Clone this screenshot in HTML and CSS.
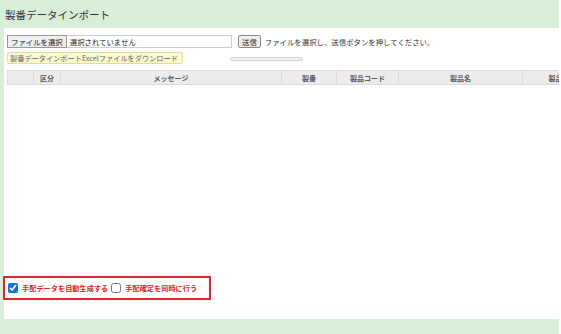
FILE: index.html
```html
<!DOCTYPE html>
<html lang="ja">
<head>
    <meta charset="UTF-8">
    <meta name="viewport" content="width=device-width, initial-scale=1.0">
    <title>製番データインポート</title>
    <link rel="stylesheet" href="styles.css">
</head>
<body>

    <div class="page">
        <div class="page-header">
            <h1>製番データインポート</h1>
        </div>

        <div class="panel">
            <div class="upload-row">
                <div class="file-box">
                    <span class="file-button">ファイルを選択</span>
                    <span class="file-name">選択されていません</span>
                </div>
                <button class="send-button">送信</button>
                <span class="hint">ファイルを選択し、送信ボタンを押してください。</span>
            </div>

            <div class="download-row">
                <a class="download-link" href="#">製番データインポートExcelファイルをダウンロード</a>
                <div class="progress"></div>
            </div>

            <div class="table-wrap">
                <table>
                    <thead>
                        <tr>
                            <th class="col-check"></th>
                            <th class="col-kind">区分</th>
                            <th class="col-message">メッセージ</th>
                            <th class="col-serial">製番</th>
                            <th class="col-code">製品コード</th>
                            <th class="col-name">製品名</th>
                            <th class="col-more">製品区分</th>
                        </tr>
                    </thead>
                    <tbody id="import-table">
                        <!-- rows are filled after import -->
                    </tbody>
                </table>
            </div>

            <div class="options">
                <label class="option">
                    <input type="checkbox" checked>
                    <span>手配データを自動生成する</span>
                </label>
                <label class="option">
                    <input type="checkbox">
                    <span>手配確定を同時に行う</span>
                </label>
            </div>
        </div>
    </div>

</body>
</html>
```

FILE: styles.css
```css
/* General styling */
body {
    margin: 0;
    padding: 0;
    background: #ffffff;
    font-family: "Noto Sans CJK JP", "Noto Sans", sans-serif;
    color: #333;
    overflow: hidden;
}

.page {
    width: 559px;
    height: 334px;
    background: #d9eed9;
    overflow: hidden;
}

.page-header {
    height: 28px;
}

h1 {
    margin: 0;
    padding: 8px 0 0 5px;
    font-size: 10.5px;
    font-weight: normal;
    line-height: 14px;
    color: #333;
}

.panel {
    margin-left: 4px;
    height: 291px;
    background: #ffffff;
    padding: 7px 0 0 3px;
    box-sizing: border-box;
    display: flex;
    flex-direction: column;
}

/* Upload row */
.upload-row {
    display: flex;
    align-items: center;
    height: 13px;
    font-size: 7.4px;
}

.file-box {
    display: flex;
    align-items: center;
    width: 225px;
    height: 13px;
    border: 1px solid #ccc;
    box-sizing: border-box;
}

.file-button {
    height: 13px;
    line-height: 11px;
    padding: 0 3px;
    margin-left: -1px;
    background: #efefef;
    border: 1px solid #999;
    box-sizing: border-box;
    color: #222;
}

.file-name {
    margin-left: 3px;
    color: #222;
}

.send-button {
    margin-left: 6px;
    height: 13px;
    padding: 0 3px;
    font-family: inherit;
    font-size: 7.4px;
    line-height: 11px;
    background: #efefef;
    border: 1px solid #888;
    border-radius: 2px;
    color: #222;
}

.hint {
    margin-left: 4px;
    color: #333;
}

/* Download row */
.download-row {
    display: flex;
    align-items: center;
    margin-top: 4px;
    height: 12px;
}

.download-link {
    display: block;
    width: 176px;
    height: 12px;
    line-height: 10px;
    padding-left: 2px;
    background: #fbf9cf;
    border: 1px solid #e3dd9a;
    border-radius: 2px;
    box-sizing: border-box;
    font-size: 7.2px;
    color: #666;
    text-decoration: none;
}

.progress {
    margin-left: 47px;
    margin-top: 2px;
    width: 73px;
    height: 4px;
    background: #f3f3f3;
    border: 1px solid #d4d4d4;
    border-radius: 3px;
    box-sizing: border-box;
}

/* Table */
.table-wrap {
    margin-top: 6px;
    width: 588px;
}

table {
    border-collapse: collapse;
    table-layout: fixed;
    width: 588px;
}

th {
    height: 13px;
    padding: 0;
    background: #ececec;
    border: 1px solid #dcdcdc;
    font-size: 7px;
    font-weight: bold;
    color: #5a5a5a;
    text-align: center;
}

.col-check { width: 25px; }
.col-kind { width: 26px; }
.col-message { width: 220px; }
.col-serial { width: 54px; }
.col-code { width: 61px; }
.col-name { width: 123px; }
.col-more { width: 79px; }

/* Options at the bottom */
.options {
    display: flex;
    align-items: center;
    margin-top: auto;
    margin-bottom: 19px;
    margin-left: -4px;
    width: 208px;
    height: 24px;
    border: 2px solid #e5222b;
    box-sizing: border-box;
}

.option {
    display: flex;
    align-items: center;
    font-size: 7.2px;
    font-weight: bold;
    color: #e8202a;
}

.option input {
    width: 10px;
    height: 10px;
    margin: 0 4px 0 3px;
    accent-color: #1a6fdc;
}

.option + .option input {
    margin-left: 3px;
}
```
